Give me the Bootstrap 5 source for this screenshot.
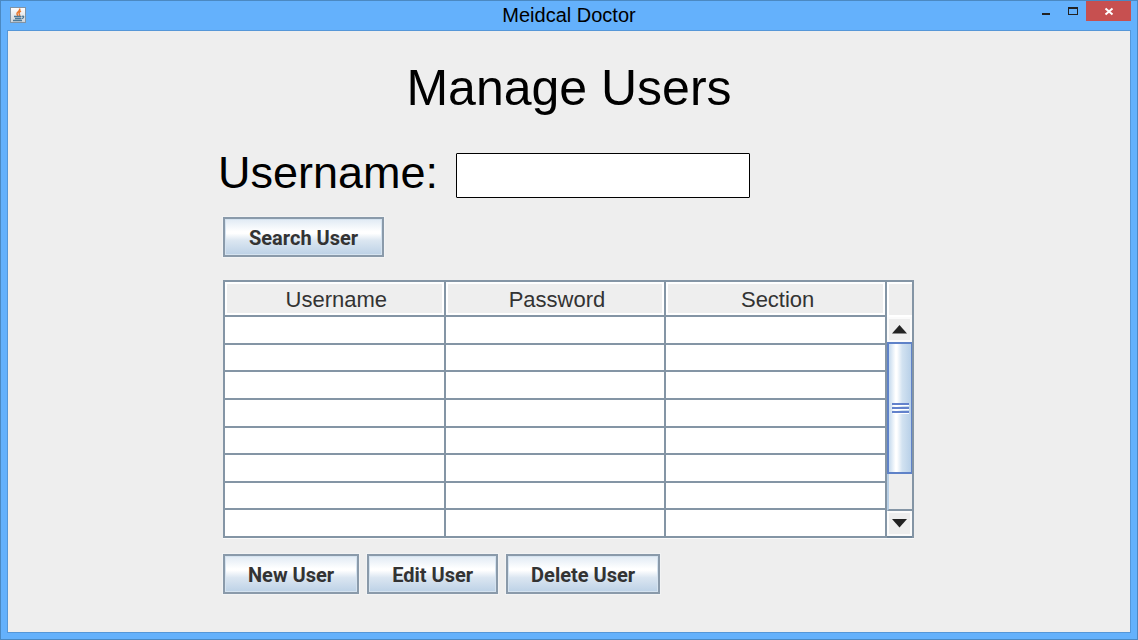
<!DOCTYPE html>
<html lang="en">
<head>
<meta charset="utf-8">
<meta name="viewport" content="width=device-width, initial-scale=1">
<title>Meidcal Doctor</title>
<link href="https://cdn.jsdelivr.net/npm/bootstrap@5.3.0/dist/css/bootstrap.min.css" rel="stylesheet">
<style>
  body { font-family: "Liberation Sans", Arial, sans-serif; color: #000; background: #64b1fc; }
  .app-window { border: 1px solid #4b89c2; padding: 0 6px 6px; background: #64b1fc; }
  .title-bar { display: grid; grid-template-columns: 1fr auto 1fr; height: 29px; }
  .app-icon { margin: 6px 0 0 3px; }
  .window-title { font-size: 20px; line-height: 28px; font-weight: 400; }
  .win-btn { border: 0; padding: 0; background: transparent; height: 20px; width: 27px; }
  .win-btn svg, .scroll-btn svg { display: block; margin: auto; }
  .win-close { background: #c75050; width: 45px; }
  .client-area { background: #eee; border: 1px solid #5597d8; padding: 27px 8px 32px; }
  .page-title { font-size: 50px; line-height: 60px; font-weight: 400; }
  .users-pane { max-width: 706px; padding: 35px 8px 0 7px; }
  .search-row { margin-left: -7px; gap: 18px; }
  .search-row label { font-size: 45px; line-height: 40px; padding-left: 2px; }
  .user-input { width: 294px; height: 45px; border: 1px solid #000; border-radius: 1px; }
  .metal-btn { height: 40px; padding: 2px 23px 0; border: 2px solid #8a9aaa; border-radius: 0; color: #333;
    font-family: Roboto, "Liberation Sans", sans-serif; font-size: 20px; font-weight: 700; line-height: 34px;
    box-shadow: 0 0 0 1px #f2f3f4, inset 0 0 0 1px #d5e3f0;
    background: linear-gradient(#e0eaf4 0, #fff 35%, #fff 40%, #dbe6f1 60%, #bcd1e6 100%); }
  .metal-btn:hover { border-color: #6382bf; color: #333; }
  .search-action { margin: 19px 0 23px; padding: 2px 24px 0; }
  .grid-frame { border: 2px solid #8495a5; border-bottom: 0; height: 258px; margin-bottom: 16px; box-shadow: 0 1px 0 #fafafa; }
  .user-grid { table-layout: fixed; width: 100%; min-width: 0; border-collapse: separate; border-spacing: 0; height: 256px; background: #fff; }
  .user-grid th, .user-grid td { padding: 0; border: solid #8495a5; border-width: 0 2px 2px 0; }
  .user-grid th { height: 35px; background: #eee; box-shadow: inset 0 0 0 2px #fff; color: #333;
    font-size: 22px; line-height: 30px; padding: 2px 0 0 4px; font-weight: 400; text-align: center; }
  .scroll-side { width: 25px; background: #eee; border-bottom: 2px solid #71869a; }
  .scroll-head { height: 35px; border: solid #fff; border-width: 2px 0 2px 2px; }
  .scroll-btn { height: 25px; padding: 0; border: 2px solid #fbfbfb; background: #eee; }
  .scroll-thumb { height: 132px; border: 2px solid #5f82c8; border-right-width: 1px;
    background: linear-gradient(90deg, #c5daee 0, #fff 30%, #fff 36%, #d2e2f1 60%, #b8d0e8 100%); }
  .scroll-track { border-left: 2px solid #b8cfe5; border-bottom: 2px solid #8495a5; }
  .action-row { gap: 8px; }
</style>
</head>
<body>
<div class="app-window min-vh-100 d-flex flex-column">
  <header class="title-bar">
    <div>
      <svg class="app-icon d-block" width="17" height="17" viewBox="0 0 17 17" aria-hidden="true">
        <defs><linearGradient id="tile" x2="0" y2="1"><stop stop-color="#fff"/><stop offset="1" stop-color="#cdd3d9"/></linearGradient></defs>
        <rect x=".5" y=".5" width="15" height="15" fill="url(#tile)" stroke="#8193a4"/>
        <path d="M9.500 1.500q1 2-1.500 3.500Q6 6.500 8 9M11 4Q8 6 9.500 7.500q.5 1-.5 1.500" fill="none" stroke="#e8772e" stroke-width="1.500"/>
        <path d="M4 9.500h7M5 11.500h6M3 13.500h9M11.500 9.500q3-1 2 1-.5 1-2 1" fill="none" stroke="#4d7896" stroke-width="1.300"/>
      </svg>
    </div>
    <h1 class="window-title m-0">Meidcal Doctor</h1>
    <div class="d-flex justify-content-end align-items-start">
      <button class="win-btn" type="button" aria-label="Minimize"><svg width="27" height="20" viewBox="0 0 27 20"><path d="M10 12h8v2h-8z" fill="#222"/></svg></button>
      <button class="win-btn" type="button" aria-label="Maximize"><svg width="27" height="20" viewBox="0 0 27 20"><path d="M9 6h10v8H9zM10 8v5h8V8z" fill="#222" fill-rule="evenodd"/></svg></button>
      <button class="win-btn win-close" type="button" aria-label="Close"><svg width="45" height="20" viewBox="0 0 45 20"><path d="M19.500 7.500l7 6M26.500 7.500l-7 6" stroke="#fff" stroke-width="2"/></svg></button>
    </div>
  </header>

  <main class="client-area flex-grow-1">
    <h2 class="page-title text-center m-0">Manage Users</h2>
    <div class="users-pane mx-auto">
      <form onsubmit="return false">
        <div class="search-row d-flex flex-wrap align-items-start">
          <label for="username">Username:</label>
          <input class="user-input bg-white px-2" type="text" id="username">
        </div>
        <button class="btn metal-btn search-action" type="submit">Search User</button>
      </form>

      <div class="grid-frame d-flex">
        <table class="user-grid">
          <thead><tr><th scope="col">Username</th><th scope="col">Password</th><th scope="col">Section</th></tr></thead>
          <tbody>
            <tr><td></td><td></td><td></td></tr>
            <tr><td></td><td></td><td></td></tr>
            <tr><td></td><td></td><td></td></tr>
            <tr><td></td><td></td><td></td></tr>
            <tr><td></td><td></td><td></td></tr>
            <tr><td></td><td></td><td></td></tr>
            <tr><td></td><td></td><td></td></tr>
            <tr><td></td><td></td><td></td></tr>
          </tbody>
        </table>
        <div class="scroll-side d-flex flex-column flex-shrink-0">
          <div class="scroll-head"></div>
          <button class="scroll-btn" type="button" aria-label="Scroll up"><svg width="17" height="9" viewBox="0 0 17 9"><path d="M8.500 0L16 8.500H1z" fill="#222"/></svg></button>
          <div class="scroll-thumb d-flex align-items-center justify-content-center">
            <svg width="17" height="12" viewBox="0 0 17 12" aria-hidden="true"><path d="M1 3.500h16M1 7.500h16M1 11.500h16" stroke="#fff"/><path d="M0 2h17M0 6h17M0 10h17" stroke="#6382cc" stroke-width="2"/></svg>
          </div>
          <div class="scroll-track flex-grow-1"></div>
          <button class="scroll-btn" type="button" aria-label="Scroll down"><svg width="17" height="9" viewBox="0 0 17 9"><path d="M8.500 8.500L16 0H1z" fill="#222"/></svg></button>
        </div>
      </div>

      <div class="action-row d-flex flex-wrap">
        <button class="btn metal-btn" type="button">New User</button>
        <button class="btn metal-btn" type="button">Edit User</button>
        <button class="btn metal-btn" type="button">Delete User</button>
      </div>
    </div>
  </main>
</div>
<script src="https://cdn.jsdelivr.net/npm/bootstrap@5.3.0/dist/js/bootstrap.bundle.min.js"></script>
</body>
</html>
